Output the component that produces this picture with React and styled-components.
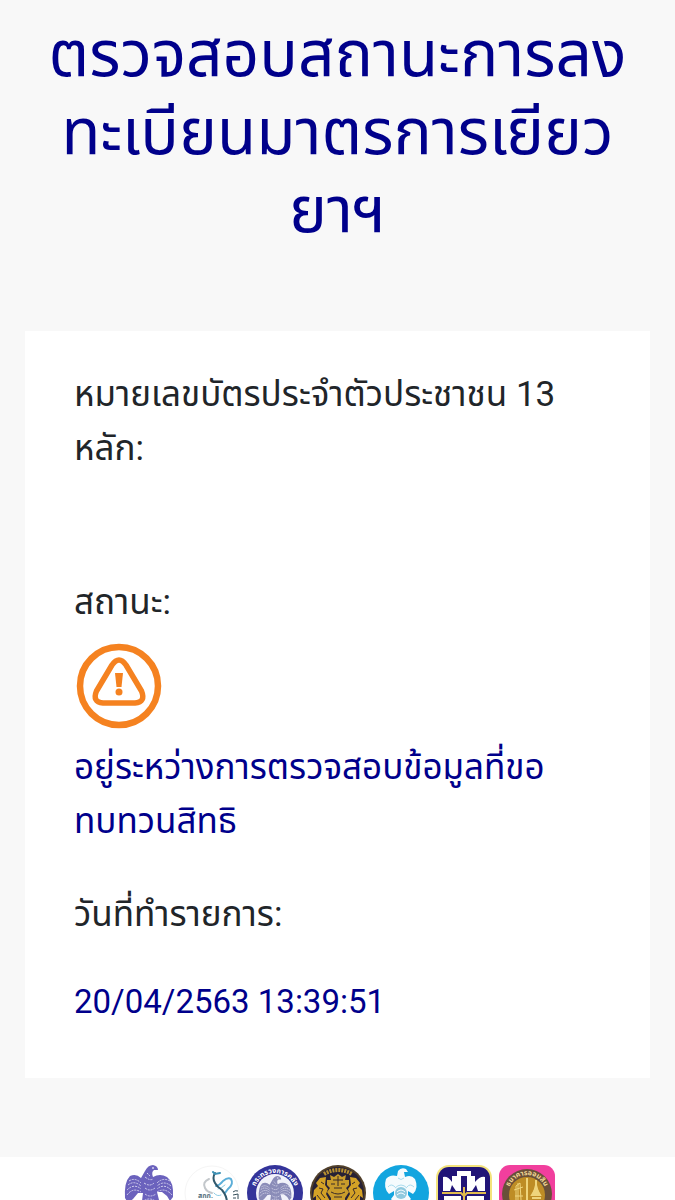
import React from 'react'
import styled, { createGlobalStyle } from 'styled-components'

const COLORS = {
  page: '#f8f8f8',
  navy: '#00008b',
  ink: '#212529',
  orange: '#f58220',
}

export default function App() {
  return (
    <>
      <GlobalStyle />
      <Page>
        <Title>
          ตรวจสอบสถานะการลง
          <br />
          ทะเบียนมาตรการเยียว
          <br />
          ยาฯ
        </Title>
        <Card>
          <Details>
            <Label>
              หมายเลขบัตรประจำตัวประชาชน 13
              <br />
              หลัก:
            </Label>
            <IdNumber />
            <Label>สถานะ:</Label>
            <Status>
              <WarningIcon />
              <span>
                อยู่ระหว่างการตรวจสอบข้อมูลที่ขอ
                <br />
                ทบทวนสิทธิ
              </span>
            </Status>
            <Label>วันที่ทำรายการ:</Label>
            <Timestamp>20/04/2563 13:39:51</Timestamp>
          </Details>
        </Card>
        <Footer>
          <GarudaLogo />
          <FiscalLogo />
          <FinanceLogo />
          <LionLogo />
          <KrungthaiLogo />
          <BaacLogo />
          <GsbLogo />
        </Footer>
      </Page>
    </>
  )
}

function WarningIcon() {
  return (
    <StatusSvg viewBox="0 0 90 90" role="img" aria-label="warning">
      <g fill="none" stroke={COLORS.orange} strokeLinejoin="round">
        <circle cx="45" cy="45" r="39" strokeWidth="6.500" />
        <path
          d="M38 24 Q45 14 52 24 L67.500 50 Q72 61 61 62 H29 Q18 61 22.500 50 Z"
          strokeWidth="5.500"
        />
      </g>
      <path d="M41 32 H49 L47.500 46 H42.500 Z" fill={COLORS.orange} />
      <circle cx="45" cy="51" r="3.500" fill={COLORS.orange} />
    </StatusSvg>
  )
}

function GarudaLogo() {
  return (
    <LogoSvg viewBox="0 0 56 56">
      <Garuda color="#6b62bd" detail="#d3d0ee" />
    </LogoSvg>
  )
}

function Garuda({ color, detail }) {
  return (
    <g>
      <path
        d="M20 13 L24 6 Q27 0 32 0 Q37 1 37 5 L33 5 Q30 7 32 12 Q39 8 46 12 Q53 17 52 32 L49 36 L46 31 L41 27 L36 27 L38 35 L43 42 L38 47 L29 55 L20 48 L15 41 L21 36 L22 28 L17 28 L12 34 L7 38 L4 33 Q3 17 9 11 Q15 8 20 13 Z"
        fill={color}
      />
      <path
        d="M8 16 Q14 12 20 18 M7 20 Q13 15 20 21 M6 25 Q13 18 20 24 M6 30 Q12 22 20 27 M49 16 Q42 12 36 18 M50 21 Q43 15 36 21 M50 25 Q43 18 36 24 M51 30 Q44 22 36 27 M26 8 L29 11 M24 12 Q29 16 32 14 M23 18 Q29 22 33 18 M24 23 Q29 27 34 23 M24 29 Q29 33 35 29 M21 37 Q28 31 36 37 M22 42 Q29 36 37 43"
        fill="none"
        stroke={detail}
        strokeWidth="1"
        strokeDasharray="2 1"
      />
      <circle cx="32" cy="3" r="1" fill={detail} />
    </g>
  )
}

function FiscalLogo() {
  return (
    <LogoSvg viewBox="0 0 56 56">
      <circle cx="28" cy="28" r="27" fill="none" stroke="#f5f5f5" />
      <g fill="none" strokeLinecap="round">
        <path d="M25 14 Q18 17 21 23 Q23 27 28 28" stroke="#c3c7cb" strokeWidth="2" />
        <path
          d="M32 21 Q36 20 39 16 Q44 12 47 14 Q50 19 44 24 L41 28"
          stroke="#5baed8"
          strokeWidth="2"
        />
        <path d="M34 24 Q38 23 41 20 M30 28 Q33 32 37 30" stroke="#8bcbe5" />
        <path
          d="M31 8 Q28 13 31 18 Q33 22 38 25 Q43 31 43 38"
          stroke="#31596c"
          strokeWidth="2"
        />
        <path d="M36 8 L31 9 L29 7" stroke="#3c91b5" strokeWidth="2" />
      </g>
      <LogoText x="14" y="33" fill="#56717e">
        สกก.
      </LogoText>
      <path
        d="M49 27 Q51 25 54 26 M49 30 L54 29 V34 M49 33 H52"
        stroke="#344d58"
        fill="none"
      />
    </LogoSvg>
  )
}

function FinanceLogo() {
  return (
    <LogoSvg viewBox="0 0 56 56">
      <path id="finance-arc" d="M7 29 A21 21 0 0 1 49 29" fill="none" />
      <circle cx="28" cy="28" r="28" fill="#34349a" />
      <circle cx="28" cy="28" r="19" fill="#f1f2fa" />
      <LogoText fill="#ffffff">
        <textPath href="#finance-arc" startOffset="50%" textAnchor="middle">
          กระทรวงการคลัง
        </textPath>
      </LogoText>
      <g transform="translate(9 11) scale(0.680)">
        <Garuda color="#8a8cb8" detail="#e9e9f6" />
      </g>
    </LogoSvg>
  )
}

function LionLogo() {
  return (
    <LogoSvg viewBox="0 0 56 56">
      <circle cx="28" cy="28" r="28" fill="#51402b" />
      <circle cx="28" cy="28" r="26" fill="#272135" />
      <path
        d="M14 9 Q28 1 42 9"
        stroke="#b8902f"
        strokeWidth="4"
        strokeDasharray="2 1"
        fill="none"
      />
      <path
        d="M20 10 L24 12 L28 9 L32 12 L36 10 L35 15 H39 V20 L36 23 L39 27 L35 33 V46 H21 V33 L17 27 L20 23 L17 20 V15 H21 Z"
        fill="#c99c2b"
      />
      <g id="lion-side" fill="#d4a226">
        <path d="M16 12 L10 13 L6 18 L8 21 L4 25 L3 33 L6 31 L6 40 L10 45 L20 48 L20 36 L16 29 L18 24 L15 20 Z" />
      </g>
      <use href="#lion-side" transform="translate(56 0) scale(-1 1)" />
      <path
        d="M23 15 H33 M21 19 H25 M31 19 H35 M24 23 H32 M28 11 V21 M21 27 Q28 31 35 27 M24 32 H32 M24 36 H32 M11 17 L14 19 M45 17 L42 19 M9 23 L13 24 L11 28 L15 33 M47 23 L43 24 L45 28 L41 33 M7 30 L11 35 M49 30 L45 35"
        stroke="#392b29"
        strokeWidth="1"
        fill="none"
      />
    </LogoSvg>
  )
}

function KrungthaiLogo() {
  return (
    <LogoSvg viewBox="0 0 56 56">
      <circle cx="28" cy="28" r="28" fill="#12a5df" />
      <path
        d="M24 11 L25 6 Q28 2 33 4 L35 7 L31 7 L32 12 Q38 9 42 14 Q46 23 40 29 L35 26 L35 30 L38 34 L34 38 L28 43 L22 39 L18 34 L21 30 L21 26 L16 29 Q10 23 13 14 Q17 9 24 11 Z"
        fill="#f5fbfd"
      />
      <path
        d="M15 22 Q18 18 22 22 M41 22 Q37 18 34 22 M22 23 Q28 17 34 23 M25 13 Q28 16 31 13"
        stroke="#a8dbee"
        strokeWidth="1"
        fill="none"
      />
      <circle cx="28" cy="28" r="6" fill="#8fc9de" />
      <path d="M24 27 Q28 23 32 27 M24 30 Q28 26 32 30" stroke="#f5fbfd" fill="none" />
    </LogoSvg>
  )
}

function BaacLogo() {
  return (
    <LogoSvg viewBox="0 0 56 56">
      <rect width="56" height="56" rx="13" fill="#f3e37c" />
      <rect x="2" y="2" width="52" height="54" rx="11" fill="#211477" />
      <path
        d="M7 12 Q12 11 16 17 V11 H21 V6 H35 V11 H39 V17 Q44 11 49 12 V26 H42 L40 20 L36 26 H31 V11 H25 V26 H20 L16 20 L14 26 H7 Z"
        fill="#ffffff"
      />
      <path d="M28 22 V44" stroke="#e0bb4d" strokeWidth="2" />
      <path
        d="M6 28 H25 L28 31 L31 28 H50"
        stroke="#e0bb4d"
        strokeWidth="2"
        fill="none"
      />
      <path d="M8 31 H25 V46 H8 Z M31 31 H48 V46 H31 Z" fill="#ffffff" />
    </LogoSvg>
  )
}

function GsbLogo() {
  return (
    <LogoSvg viewBox="0 0 56 56">
      <path id="gsb-arc" d="M9 29 A19 19 0 0 1 47 29" fill="none" />
      <rect width="56" height="56" rx="11" fill="#f13f9d" />
      <circle cx="28" cy="29" r="25" fill="#695039" />
      <circle cx="28" cy="30" r="18" fill="#be8d25" />
      <LogoText fill="#f2d996">
        <textPath href="#gsb-arc" startOffset="50%" textAnchor="middle">
          ธนาคารออมสิน
        </textPath>
      </LogoText>
      <g fill="none" stroke="#efd57c">
        <path d="M19 18 V35 M17 35 V21 L21 18 L22 35 M15 25 L24 22 M16 31 H24" />
        <path d="M28 13 V46" strokeWidth="2" />
        <path d="M37 15 V23 L41 30 H33 L37 23 M33 33 H42" strokeWidth="2" />
      </g>
      <path d="M36 20 H38 L41 31 H33 Z" fill="#efd57c" />
    </LogoSvg>
  )
}

const GlobalStyle = createGlobalStyle`
  * {
    box-sizing: border-box;
  }
  body {
    margin: 0;
    background: ${COLORS.page};
    color: ${COLORS.ink};
    font-family: Roboto, 'Noto Sans Thai', 'Noto Sans', sans-serif;
  }
`

const Page = styled.main`
  padding-top: 16px;
`

const Title = styled.h1`
  margin: 0;
  font-size: 64px;
  font-weight: 400;
  line-height: 78px;
  text-align: center;
  white-space: nowrap;
  color: ${COLORS.navy};
`

const Card = styled.section`
  margin: 81px 25px 79px;
  padding: 37px 49px 49px;
  background: #ffffff;
`

const Details = styled.dl`
  margin: 0;
  font-size: 35px;
  line-height: 54px;
  white-space: nowrap;
`

const Label = styled.dt``

const Value = styled.dd`
  margin: 0;
  color: ${COLORS.navy};
`

const IdNumber = styled(Value)`
  height: 100px;
`

const Status = styled(Value)`
  padding: 11px 0 39px;
`

const Timestamp = styled(Value)`
  padding-top: 33px;
  font-size: 33px;
`

const StatusSvg = styled.svg`
  display: block;
  width: 90px;
  height: 90px;
  margin-bottom: 10px;
`

const Footer = styled.footer`
  display: flex;
  justify-content: center;
  gap: 7px;
  padding: 8px 0;
  background: #ffffff;
`

const LogoSvg = styled.svg`
  width: 56px;
  height: 56px;
`

const LogoText = styled.text`
  font-size: 7px;
  font-weight: 700;
`
